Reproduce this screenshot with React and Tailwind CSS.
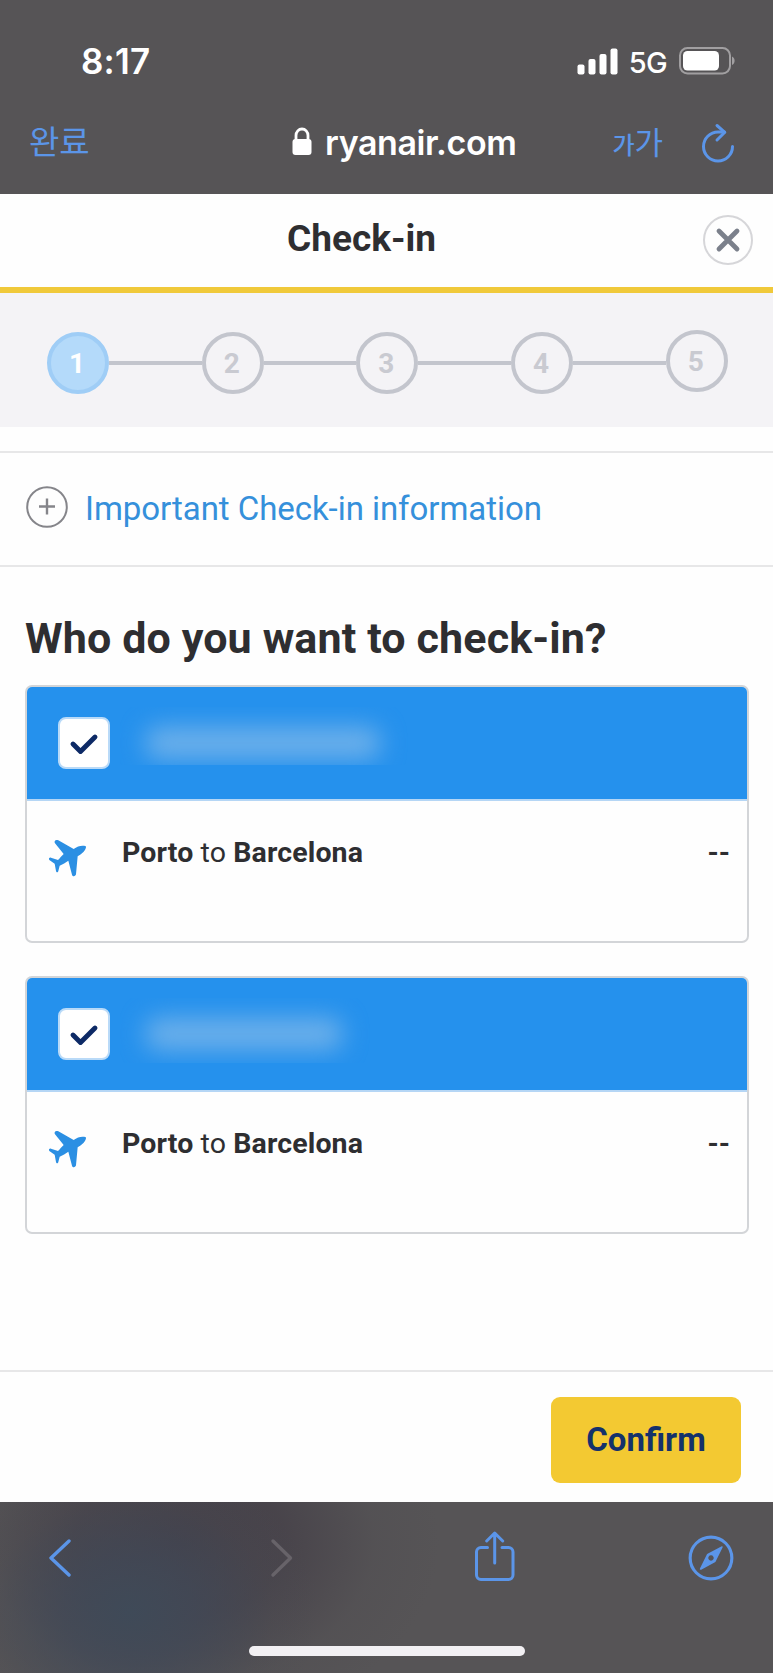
import React, { useState } from 'react';

const steps = [1, 2, 3, 4, 5];

const initialPassengers = [
  { id: 1, from: 'Porto', to: 'Barcelona', seat: '--', checked: true },
  { id: 2, from: 'Porto', to: 'Barcelona', seat: '--', checked: true },
];

const PlaneIcon = () => (
  <svg width="39" height="38" viewBox="144 504 117 114" fill="#2b8fe3">
    <path d="M256 525C246 522 232 525 221 534L175 508C167 504 161 510 165 517L191 549C185 555 179 562 174 567L153 560C148 559 145 563 148 567L164 578L168 600C169 605 174 605 175 600L179 584C188 580 197 575 205 569L216 611C218 618 227 616 228 610L233 556C247 549 257 537 258 529C258 527 257 525 256 525Z" />
  </svg>
);

const StatusBar = () => (
  <div className="flex h-[100px] items-start justify-between pl-[81px] pr-[37px] pt-[40px] font-['Inter',sans-serif] text-white">
    <span className="text-[35px] font-semibold leading-[42px] tracking-[0.2px]">8:17</span>
    <div className="mt-px flex h-[40px] items-center">
      <svg width="41" height="27" viewBox="0 0 41 27" fill="white">
        <rect x="0.5" y="16.5" width="7" height="10" rx="2" />
        <rect x="11.5" y="11" width="7" height="15.5" rx="2" />
        <rect x="22.5" y="6" width="7" height="20.5" rx="2" />
        <rect x="33.5" y="0.5" width="7" height="26" rx="2" />
      </svg>
      <span className="ml-[11px] mt-[3px] text-[29px] font-[450] leading-[40px] tracking-[-0.7px]">5G</span>
      <svg className="ml-3" width="57" height="28" viewBox="0 0 57 28">
        <rect x="1" y="1" width="50" height="25.5" rx="7.5" fill="none" stroke="#a19fa1" strokeWidth="2" />
        <rect x="4" y="4" width="36" height="19.5" rx="4.5" fill="white" />
        <path d="M53 9.5C56.5 11 56.5 16.5 53 18Z" fill="#a19fa1" />
      </svg>
    </div>
  </div>
);

const AddressBar = () => (
  <div className="flex h-[94px] items-start pl-[29px] pr-[38px] pt-[19px]">
    <span className="-mt-[2px] w-[263px] font-['Noto_Sans_CJK_KR',sans-serif] text-[33px] leading-[46px] text-[#5b95e8]">완료</span>
    <svg className="mt-[8px]" width="20" height="29" viewBox="0 0 20 29">
      <path d="M4 13V8.5a6 6.5 0 0 1 12 0V13" fill="none" stroke="white" strokeWidth="2.8" />
      <rect x="0.5" y="12" width="19" height="16" rx="3" fill="white" />
    </svg>
    <span className="ml-[13px] mt-px font-['Inter',sans-serif] text-[34px] font-[560] leading-[46px] tracking-[-0.4px] text-white">ryanair.com</span>
    <div className="-mt-px ml-auto flex items-baseline font-['Noto_Sans_CJK_KR',sans-serif] leading-[46px] text-[#5b95e8]">
      <span className="text-[24px] font-medium">가</span>
      <span className="text-[31px]">가</span>
    </div>
    <svg className="ml-[38px] mt-[4px]" width="34" height="40" viewBox="0 0 34 40" fill="none" stroke="#5b95e8" strokeWidth="3" strokeLinecap="round" strokeLinejoin="round">
      <path d="M31.5 23.5A14.5 14.5 0 1 1 17 9H23.5" />
      <path d="M16 2.5L23.8 9.3L16 17" />
    </svg>
  </div>
);

const Stepper = () => (
  <div className="flex h-[134px] shrink-0 items-start bg-[#f4f3f6] pl-[47px] pt-[39px]">
    {steps.map(step => (
      <React.Fragment key={step}>
        {step > 1 && <div className="mt-[29px] h-1 w-[92.7px] shrink-0 bg-[#c3c5cd]" />}
        <div
          className={`flex size-[62px] shrink-0 items-center justify-center rounded-full border-4 pt-[2px] pr-[2px] text-[28px] font-bold ${
            step === 1 ? 'border-[#9fcdf6] bg-[#b4dafa] text-white' : 'border-[#c3c5cd] text-[#c9cad1]'
          } ${step === 5 ? '-mt-[2px]' : ''}`}
        >
          {step}
        </div>
      </React.Fragment>
    ))}
  </div>
);

const PassengerCard = ({ passenger, onToggle }) => (
  <div className="h-[258px] overflow-hidden rounded-[7px] border-2 border-[#d3d5d8]">
    <div className="flex h-[114px] items-start border-b-2 border-[#b5d6f5] bg-[#2591ed] pl-[31px] pt-[30px]">
      <button
        type="button"
        onClick={() => onToggle(passenger.id)}
        aria-label="Select passenger"
        className="flex size-[52px] items-center justify-center rounded-[8px] border-2 border-[#b9daf8] bg-white"
      >
        {passenger.checked && (
          <svg className="mt-px" width="30" height="24" viewBox="0 0 30 24" fill="none" stroke="#0d2a66" strokeWidth="4.9" strokeLinecap="round" strokeLinejoin="round">
            <path d="M4 12L11.5 19.5L26 5" />
          </svg>
        )}
      </button>
      {/* passenger name is hidden behind a blur */}
      <div className={passenger.id === 1 ? '-mt-[10px] ml-[10px] h-[58px] w-[290px] overflow-hidden' : '-mt-[10px] ml-[10px] h-[65px] w-[260px] overflow-hidden'}>
        <div className={passenger.id === 1 ? 'ml-[26px] mt-[20px] h-[32px] w-[234px] rounded-xl bg-[#6db0ea] blur-[12px]' : 'ml-[26px] mt-[20px] h-[32px] w-[196px] rounded-xl bg-[#6db0ea] blur-[12px]'} />
      </div>
    </div>
    <div className="flex items-start pl-[21px] pr-[17px] pt-[38px]">
      <PlaneIcon />
      <p className="-mt-[3px] ml-[35px] text-[28.5px] leading-[34px] tracking-[0.12px]">
        <b>{passenger.from}</b> to <b>{passenger.to}</b>
      </p>
      <span className="-mt-[3px] ml-auto text-[28.5px] font-bold leading-[34px]">{passenger.seat}</span>
    </div>
  </div>
);

const BrowserToolbar = () => (
  <div className="flex h-[171px] shrink-0 flex-col bg-[#565456] bg-[radial-gradient(ellipse_190px_150px_at_130px_110px,#3f4a58_0%,#404958b3_35%,#4a4d5533_75%,transparent_100%),radial-gradient(ellipse_260px_190px_at_180px_40px,#433f48_0%,#454048cc_40%,#4d4a4f44_75%,transparent_100%)]">
    <div className="flex h-[144px] items-start pl-[47px] pt-[29px] text-[#5b95e8]">
      <svg className="mt-[7px]" width="24" height="40" viewBox="0 0 24 40" fill="none" stroke="currentColor" strokeWidth="3.4" strokeLinecap="round" strokeLinejoin="round">
        <path d="M22 3L4 20L22 37" />
      </svg>
      <svg className="ml-[198px] mt-[7px]" width="24" height="40" viewBox="0 0 24 40" fill="none" stroke="#676369" strokeWidth="3.4" strokeLinecap="round" strokeLinejoin="round">
        <path d="M4 3L21.5 20L4 37" />
      </svg>
      <svg className="ml-[181px]" width="42" height="52" viewBox="0 0 42 52" fill="none" stroke="currentColor" strokeWidth="3" strokeLinecap="round" strokeLinejoin="round">
        <path d="M13.5 16.5H7A4.5 4.5 0 0 0 2.5 21V44A4.5 4.5 0 0 0 7 48.5H34.5A4.5 4.5 0 0 0 39 44V21A4.5 4.5 0 0 0 34.5 16.5H28" />
        <path d="M20.7 32V2.5M12.7 10L20.7 2L28.7 10" />
      </svg>
      <svg className="ml-[172px] mt-[4px]" width="46" height="46" viewBox="0 0 47 47">
        <circle cx="23.5" cy="23.5" r="21.3" fill="none" stroke="currentColor" strokeWidth="3.2" />
        <path fillRule="evenodd" fill="currentColor" d="M34.5 11.5Q36 11 35.2 13L28 27.5L13.5 35.5Q11.5 36 12.2 34.3L19.5 19.5ZM23.5 20.7a2.8 2.8 0 1 0 0.01 0Z" />
      </svg>
    </div>
    <div className="ml-[249px] h-[10px] w-[276px] rounded-full bg-[#f2f0f3]" />
  </div>
);

const App = () => {
  const [passengers, setPassengers] = useState(initialPassengers);

  const handleToggle = (id) => {
    setPassengers(prev => prev.map(p => (p.id === id ? { ...p, checked: !p.checked } : p)));
  };

  return (
    <div className="flex h-[1673px] w-[773px] flex-col overflow-hidden bg-[#fefefe] font-['Roboto',sans-serif] text-[#2e2e31]">
      <div className="h-[194px] shrink-0 bg-[#565456]">
        <StatusBar />
        <AddressBar />
      </div>

      <header className="flex h-[99px] shrink-0 items-start border-b-[6px] border-[#f0c93a] pr-[20px] pt-[21px]">
        <h1 className="ml-[287px] mt-[4px] text-[37px] font-bold leading-[40px]">Check-in</h1>
        <button type="button" aria-label="Close" className="ml-auto flex size-[50px] items-center justify-center rounded-full border-2 border-[#d6d6d9]">
          <svg width="26" height="26" viewBox="0 0 26 26" stroke="#7b808b" strokeWidth="4.8" strokeLinecap="round">
            <path d="M4 4L22 22M22 4L4 22" />
          </svg>
        </button>
      </header>

      <Stepper />

      <div className="mt-[24px] flex h-[116px] shrink-0 items-start border-y-2 border-[#e7e7e8] pl-[26px] pt-[33px]">
        <svg width="42" height="42" viewBox="0 0 42 42" fill="none" stroke="#85858a" strokeWidth="2">
          <circle cx="21" cy="21" r="19.8" />
          <path d="M13 20.5H29M21 12.5V28.5" strokeWidth="2.4" />
        </svg>
        <a href="#info" className="ml-[17px] mt-[2px] text-[33px] leading-[42px] tracking-[-0.05px] text-[#3590db]">Important Check-in information</a>
      </div>

      <main className="flex grow flex-col pl-[25px] pr-[24px] pt-[46px]">
        <h2 className="text-[43px] font-bold leading-[50px] tracking-[0.13px]">Who do you want to check-in?</h2>
        <div className="mt-[22px] flex flex-col gap-[33px]">
          {passengers.map(passenger => (
            <PassengerCard key={passenger.id} passenger={passenger} onToggle={handleToggle} />
          ))}
        </div>
      </main>

      <footer className="flex h-[132px] shrink-0 items-start justify-end border-t-2 border-[#e7e7e8] pr-[32px] pt-[25px]">
        <button type="button" className="h-[86px] w-[190px] rounded-[9px] bg-[#f3c932] text-[33px] font-bold text-[#14316b]">Confirm</button>
      </footer>

      <BrowserToolbar />
    </div>
  );
};

export default App;
